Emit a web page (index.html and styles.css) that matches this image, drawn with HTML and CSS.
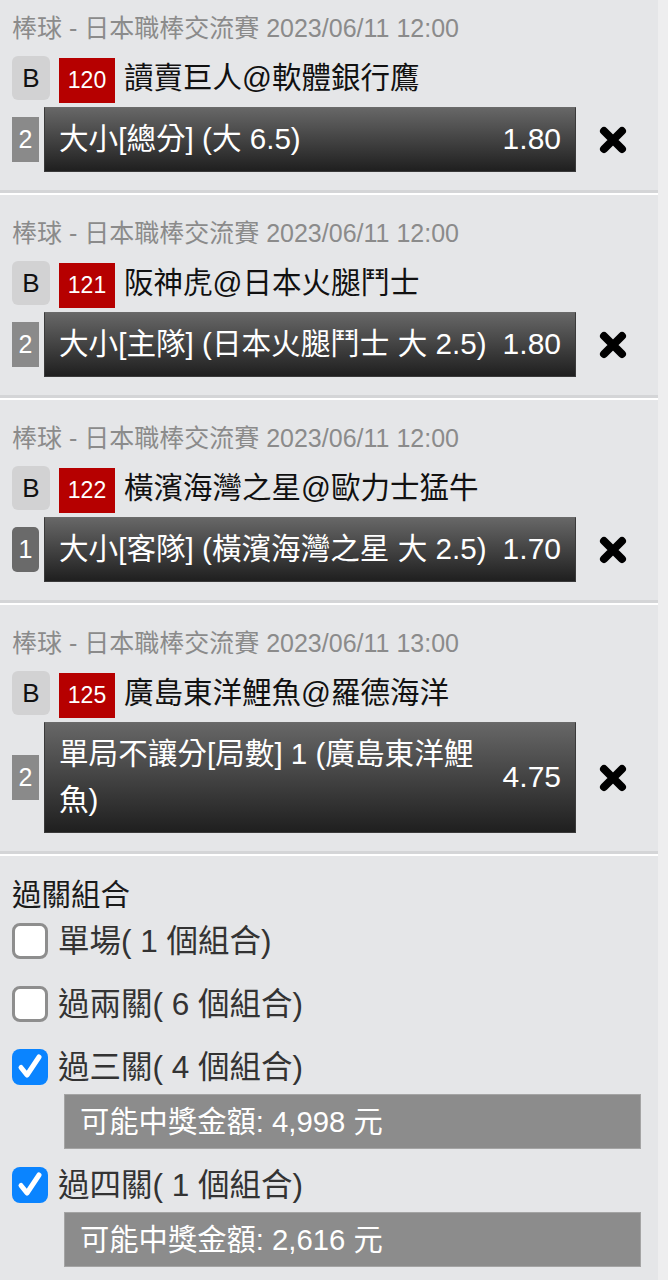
FILE: index.html
```html
<!DOCTYPE html>
<html lang="zh-Hant">
<head>
<meta charset="utf-8">
<title>注單</title>
<link rel="stylesheet" href="styles.css">
</head>
<body>
<div class="page">
  <div class="card first">
    <div class="league">棒球 - 日本職棒交流賽 2023/06/11 12:00</div>
    <div class="match">
      <span class="tag">B</span>
      <span class="code">120</span>
      <span class="teams">讀賣巨人@軟體銀行鷹</span>
    </div>
    <div class="bet">
      <span class="num">2</span>
      <div class="bar">
        <span class="pick">大小[總分] (大 6.5)</span>
        <span class="odds">1.80</span>
      </div>
      <span class="del"><svg viewBox="0 0 30 30" width="30" height="30"><path d="M6 6 L24 24 M24 6 L6 24"/></svg></span>
    </div>
  </div>

  <div class="card">
    <div class="league">棒球 - 日本職棒交流賽 2023/06/11 12:00</div>
    <div class="match">
      <span class="tag">B</span>
      <span class="code">121</span>
      <span class="teams">阪神虎@日本火腿鬥士</span>
    </div>
    <div class="bet">
      <span class="num">2</span>
      <div class="bar">
        <span class="pick">大小[主隊] (日本火腿鬥士 大 2.5)</span>
        <span class="odds">1.80</span>
      </div>
      <span class="del"><svg viewBox="0 0 30 30" width="30" height="30"><path d="M6 6 L24 24 M24 6 L6 24"/></svg></span>
    </div>
  </div>

  <div class="card">
    <div class="league">棒球 - 日本職棒交流賽 2023/06/11 12:00</div>
    <div class="match">
      <span class="tag">B</span>
      <span class="code">122</span>
      <span class="teams">橫濱海灣之星@歐力士猛牛</span>
    </div>
    <div class="bet">
      <span class="num dark">1</span>
      <div class="bar">
        <span class="pick">大小[客隊] (橫濱海灣之星 大 2.5)</span>
        <span class="odds">1.70</span>
      </div>
      <span class="del"><svg viewBox="0 0 30 30" width="30" height="30"><path d="M6 6 L24 24 M24 6 L6 24"/></svg></span>
    </div>
  </div>

  <div class="card">
    <div class="league">棒球 - 日本職棒交流賽 2023/06/11 13:00</div>
    <div class="match">
      <span class="tag">B</span>
      <span class="code">125</span>
      <span class="teams">廣島東洋鯉魚@羅德海洋</span>
    </div>
    <div class="bet">
      <span class="num">2</span>
      <div class="bar">
        <span class="pick">單局不讓分[局數] 1 (廣島東洋鯉魚)</span>
        <span class="odds">4.75</span>
      </div>
      <span class="del"><svg viewBox="0 0 30 30" width="30" height="30"><path d="M6 6 L24 24 M24 6 L6 24"/></svg></span>
    </div>
  </div>

  <div class="combos">
    <div class="title">過關組合</div>
    <div class="opt">
      <span class="box"></span>
      <span class="label">單場( 1 個組合)</span>
    </div>
    <div class="opt">
      <span class="box"></span>
      <span class="label">過兩關( 6 個組合)</span>
    </div>
    <div class="opt on">
      <span class="box checked"><svg viewBox="0 0 36 36" width="36" height="36"><path d="M9 18.5 L15 26 L27 8"/></svg></span>
      <span class="label">過三關( 4 個組合)</span>
    </div>
    <div class="prize">可能中獎金額: 4,998 元</div>
    <div class="opt on">
      <span class="box checked"><svg viewBox="0 0 36 36" width="36" height="36"><path d="M9 18.5 L15 26 L27 8"/></svg></span>
      <span class="label">過四關( 1 個組合)</span>
    </div>
    <div class="prize">可能中獎金額: 2,616 元</div>
  </div>
</div>
</body>
</html>
```

FILE: styles.css
```css
* { box-sizing: border-box; }

html, body {
  margin: 0;
  padding: 0;
}

body {
  background: #eeeeef;
  font-family: "Liberation Sans", "Noto Sans CJK TC", sans-serif;
  color: #111;
}

.page {
  width: 658px;
  background: #e5e6e8;
}

.card {
  padding: 23px 0 18px 12px;
  border-bottom: 3px solid #d4d5d7;
  box-shadow: 0 2px 0 #ffffff;
  margin-bottom: 2px;
}

.card.first {
  padding-top: 13px;
}

.league {
  font-size: 25px;
  line-height: 30px;
  color: #8b8b8b;
  white-space: nowrap;
}

.match {
  display: flex;
  align-items: flex-start;
  margin-top: 13px;
  height: 47px;
}

.tag {
  width: 38px;
  height: 44px;
  border-radius: 6px;
  background: #d2d2d3;
  color: #111;
  font-size: 26px;
  display: flex;
  align-items: center;
  justify-content: center;
  margin-right: 9px;
}

.code {
  width: 56px;
  height: 45px;
  margin-top: 2px;
  background: #b60000;
  color: #fff;
  font-size: 23px;
  display: flex;
  align-items: center;
  justify-content: center;
  margin-right: 9px;
}

.teams {
  font-size: 29.5px;
  line-height: 44px;
  white-space: nowrap;
}

.bet {
  display: flex;
  align-items: center;
  margin-top: 4px;
}

.num {
  width: 27px;
  height: 45px;
  flex: none;
  background: #8a8a8a;
  color: #fff;
  font-size: 25px;
  display: flex;
  align-items: center;
  justify-content: center;
  margin-right: 5px;
}

.num.dark {
  background: #6a6a6a;
  border-radius: 5px;
}

.bar {
  width: 532px;
  flex: none;
  display: flex;
  align-items: center;
  padding: 8px 14px 9px 14px;
  background: linear-gradient(#676767, #1f1f1f);
  color: #fff;
  border: 1px solid #3a3a3a;
  border-top-color: #6a6a6a;
}

.pick {
  flex: 1;
  min-width: 0;
  font-size: 29.6px;
  line-height: 46px;
}

.odds {
  flex: none;
  margin-left: 5px;
  font-size: 30px;
  line-height: 46px;
}

.del {
  flex: none;
  width: 30px;
  height: 30px;
  margin-left: 22px;
}

.del svg {
  display: block;
  filter: blur(0.5px);
}

.del path {
  fill: none;
  stroke: #000;
  stroke-width: 8;
  stroke-linecap: round;
}

.combos {
  padding: 19px 0 10px 12px;
}

.title {
  font-size: 29.5px;
  line-height: 40px;
  color: #1a1a1a;
  margin-bottom: 3px;
}

.opt {
  display: flex;
  align-items: center;
  height: 46px;
  margin-bottom: 17px;
}

.opt.on {
  margin-bottom: 4px;
}

.box {
  width: 36px;
  height: 36px;
  flex: none;
  border: 3px solid #8e8e8e;
  border-radius: 8px;
  background: #fff;
  margin-right: 10px;
}

.box.checked {
  border: none;
  background: #0a84ff;
}

.box.checked svg {
  display: block;
}

.box.checked path {
  fill: none;
  stroke: #fff;
  stroke-width: 5;
  stroke-linecap: round;
  stroke-linejoin: round;
}

.label {
  font-size: 31.5px;
  line-height: 46px;
  color: #333;
  white-space: nowrap;
}

.prize {
  margin-left: 52px;
  width: 577px;
  height: 55px;
  background: #8c8c8c;
  border: 1px solid #a4a4a4;
  color: #fff;
  font-size: 29.3px;
  line-height: 53px;
  padding-left: 15px;
  margin-bottom: 13px;
}
```
